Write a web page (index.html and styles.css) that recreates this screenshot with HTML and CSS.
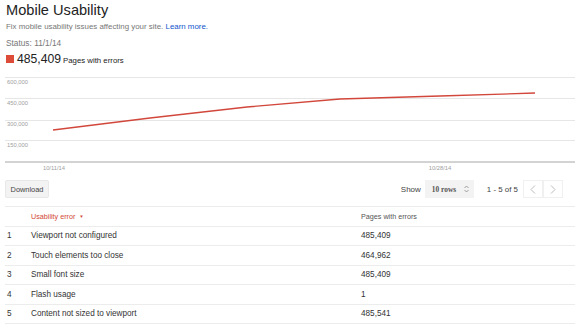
FILE: index.html
```html
<!DOCTYPE html>
<html lang="en">
<head>
    <meta charset="UTF-8">
    <meta name="viewport" content="width=device-width, initial-scale=1.0">
    <title>Mobile Usability</title>
    <link rel="stylesheet" href="styles.css">
</head>
<body>
    <div class="header">
        <h1 class="title">Mobile Usability</h1>
        <div class="desc">Fix mobile usability issues affecting your site. <a href="#">Learn more.</a></div>
        <div class="status">Status: 11/1/14</div>
        <div class="total">
            <span class="swatch"></span>
            <span class="total-num">485,409</span>
            <span class="total-label">Pages with errors</span>
        </div>
    </div>

    <svg class="chart" width="575" height="105" viewBox="0 0 575 105">
        <g class="grid">
            <line x1="5" y1="7.5" x2="575" y2="7.5"></line>
            <line x1="5" y1="28.5" x2="575" y2="28.5"></line>
            <line x1="5" y1="50.5" x2="575" y2="50.5"></line>
            <line x1="5" y1="70.5" x2="575" y2="70.5"></line>
        </g>
        <line class="axis" x1="5" y1="92" x2="575" y2="92"></line>
        <g class="ylabels">
            <text x="7" y="14">600,000</text>
            <text x="7" y="35">450,000</text>
            <text x="7" y="56">300,000</text>
            <text x="7" y="77">150,000</text>
        </g>
        <g class="xlabels">
            <text x="54" y="100">10/11/14</text>
            <text x="440" y="100">10/28/14</text>
        </g>
        <polyline class="series" points="53,60 150,48 247,37 340,29 440,26 535,23"></polyline>
    </svg>

    <div class="toolbar">
        <button class="btn">Download</button>
        <div class="pager">
            <span class="show">Show</span>
            <div class="select">10 rows
                <svg width="5" height="8" viewBox="0 0 5 8"><path d="M0.5 3 L2.5 1 L4.5 3 M0.5 5 L2.5 7 L4.5 5" fill="none" stroke="#888" stroke-width="0.8"/></svg>
            </div>
            <span class="range">1 - 5 of 5</span>
            <div class="nav">
                <span class="nav-btn"><svg width="6" height="9" viewBox="0 0 6 9"><path d="M5 0.5 L1 4.5 L5 8.5" fill="none" stroke="#bbb" stroke-width="1"/></svg></span>
                <span class="nav-btn"><svg width="6" height="9" viewBox="0 0 6 9"><path d="M1 0.5 L5 4.5 L1 8.5" fill="none" stroke="#bbb" stroke-width="1"/></svg></span>
            </div>
        </div>
    </div>

    <div class="table">
        <div class="row head">
            <div class="cell"></div>
            <div class="cell sorted">Usability error <span class="arrow">&#9660;</span></div>
            <div class="cell">Pages with errors</div>
        </div>
        <div class="row">
            <div class="cell">1</div>
            <div class="cell">Viewport not configured</div>
            <div class="cell">485,409</div>
        </div>
        <div class="row">
            <div class="cell">2</div>
            <div class="cell">Touch elements too close</div>
            <div class="cell">464,962</div>
        </div>
        <div class="row">
            <div class="cell">3</div>
            <div class="cell">Small font size</div>
            <div class="cell">485,409</div>
        </div>
        <div class="row">
            <div class="cell">4</div>
            <div class="cell">Flash usage</div>
            <div class="cell">1</div>
        </div>
        <div class="row">
            <div class="cell">5</div>
            <div class="cell">Content not sized to viewport</div>
            <div class="cell">485,541</div>
        </div>
    </div>
</body>
</html>
```

FILE: styles.css
```css
html, body {
    margin: 0;
    background-color: #fff;
    font-family: "Liberation Sans", Arial, sans-serif;
    color: #222;
    overflow: hidden;
}
.header {
    padding-left: 6px;
}
.title {
    margin: 0;
    font-size: 14.6px;
    font-weight: normal;
    line-height: 20px;
    color: #222;
}
.desc {
    margin-top: 1px;
    font-size: 7.9px;
    line-height: 12px;
    color: #777;
}
.desc a {
    color: #1155cc;
    text-decoration: none;
}
.status {
    margin-top: 4px;
    font-size: 8.3px;
    line-height: 12px;
    color: #777;
}
.total {
    margin-top: 2px;
    display: flex;
    align-items: center;
    height: 16px;
}
.swatch {
    width: 8px;
    height: 8px;
    background-color: #dd4b39;
    margin-right: 3px;
}
.total-num {
    font-size: 12.2px;
    margin-right: 2px;
}
.total-label {
    font-size: 7.8px;
    padding-top: 2px;
}
.chart {
    display: block;
    margin-top: 3px;
}
.grid line {
    stroke: #e6e6e6;
    stroke-width: 1;
}
.axis {
    stroke: #c4c4c4;
    stroke-width: 1.5;
}
.ylabels text, .xlabels text {
    font-size: 5.8px;
    fill: #a0a0a0;
}
.xlabels text {
    text-anchor: middle;
}
.series {
    fill: none;
    stroke: #d2473b;
    stroke-width: 1.3;
}
.toolbar {
    margin-top: 5px;
    display: flex;
    justify-content: space-between;
    align-items: center;
    padding: 0 12px 0 5px;
    height: 18px;
}
.btn {
    height: 18px;
    width: 44px;
    padding: 0;
    font-family: inherit;
    font-size: 7.4px;
    color: #444;
    background-color: #f3f3f3;
    border: 1px solid #e8e8e8;
    border-radius: 2px;
}
.pager {
    display: flex;
    align-items: center;
    height: 18px;
}
.show {
    font-size: 8px;
    color: #444;
    margin-right: 4px;
}
.select {
    display: flex;
    align-items: center;
    justify-content: space-between;
    box-sizing: border-box;
    width: 49px;
    height: 18px;
    padding: 0 5px 0 7px;
    background-color: #f3f3f3;
    font-family: "Liberation Serif", serif;
    font-size: 7.4px;
    font-weight: bold;
    color: #555;
    margin-right: 13px;
}
.range {
    font-size: 7.9px;
    color: #444;
    margin-right: 5px;
}
.nav {
    display: flex;
}
.nav-btn {
    display: flex;
    align-items: center;
    justify-content: center;
    box-sizing: border-box;
    width: 20px;
    height: 18px;
    border: 1px solid #f0f0f0;
}
.table {
    margin-top: 8px;
    margin-left: 5px;
    border-top: 1px solid #ececec;
}
.row {
    display: grid;
    grid-template-columns: 26px 330px 1fr;
    align-items: center;
    height: 18.5px;
    border-bottom: 1px solid #ececec;
    font-size: 8.2px;
    color: #333;
}
.row .cell:first-child {
    padding-left: 2px;
}
.head {
    font-size: 7.2px;
    color: #555;
}
.sorted {
    color: #d14836;
}
.arrow {
    font-size: 4.5px;
    margin-left: 2px;
    vertical-align: 1px;
}
```
